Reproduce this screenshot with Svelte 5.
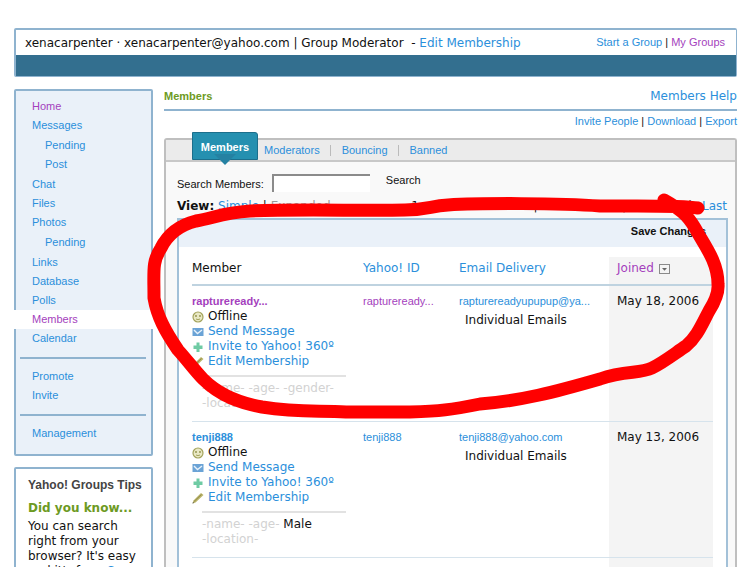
<script>
  const nav = [
    { label: 'Home', visited: true },
    { label: 'Messages', children: ['Pending', 'Post'] },
    { label: 'Chat' },
    { label: 'Files' },
    { label: 'Photos', children: ['Pending'] },
    { label: 'Links' },
    { label: 'Database' },
    { label: 'Polls' },
    { label: 'Members', visited: true, current: true },
    { label: 'Calendar' }
  ];

  const tabs = ['Moderators', 'Bouncing', 'Banned'];

  const members = [
    {
      name: 'raptureready...',
      email: 'rapturereadyupupup@ya...',
      joined: 'May 18, 2006',
      gender: '',
      visited: true
    },
    {
      name: 'tenji888',
      email: 'tenji888@yahoo.com',
      joined: 'May 13, 2006',
      gender: 'Male',
      visited: false
    },
    { name: '', email: '', joined: '', gender: '', visited: false }
  ];
</script>

<div class="page">
  <header class="top">
    <div class="top-row">
      <p class="who">
        xenacarpenter · xenacarpenter@yahoo.com | Group Moderator &nbsp;- <a href="#edit">Edit Membership</a>
      </p>
      <p class="small"><a href="#start">Start a Group</a> | <a class="visited" href="#mine">My Groups</a></p>
    </div>
    <div class="band"></div>
  </header>

  <div class="columns">
    <aside>
      <nav class="side small" aria-label="Group">
        <ul>
          {#each nav as item}
            <li>
              <a class="item" class:visited={item.visited} class:current={item.current} href="#nav">{item.label}</a>
              {#if item.children}
                <ul class="sub">
                  {#each item.children as child}
                    <li><a class="item" href="#nav">{child}</a></li>
                  {/each}
                </ul>
              {/if}
            </li>
          {/each}
        </ul>
        <hr />
        <ul>
          <li><a class="item" href="#promote">Promote</a></li>
          <li><a class="item" href="#invite">Invite</a></li>
        </ul>
        <hr />
        <ul>
          <li><a class="item" href="#manage">Management</a></li>
        </ul>
      </nav>

      <section class="tips">
        <h2>Yahoo! Groups Tips</h2>
        <h3>Did you know...</h3>
        <p>You can search right from your browser? It's easy and it's free. <a href="#see">See how</a></p>
      </section>
    </aside>

    <main>
      <div class="title">
        <h1>Members</h1>
        <a href="#help">Members Help</a>
      </div>
      <p class="actions small">
        <a href="#invite">Invite People</a> | <a href="#download">Download</a> | <a href="#export">Export</a>
      </p>

      <section class="panel">
        <div class="tabs small">
          <a class="active" href="#members">Members</a>
          {#each tabs as tab}
            <a class="tab" href="#tab">{tab}</a>
          {/each}
        </div>

        <div class="body">
          <form class="search small">
            <label for="q">Search Members:</label>
            <input id="q" type="text" />
            <button type="button">Search</button>
          </form>

          <div class="view">
            <p><b>View:</b> <a href="#simple">Simple</a> | <span class="dim">Expanded</span></p>
            <p class="pager">
              <span>1 - 30 of 106</span>
              <span class="dim">First</span><span>|</span>
              <span class="dim">&lt; Previous</span><span>|</span>
              <a href="#next">Next &gt;</a><span>|</span>
              <a href="#last">Last</a>
            </p>
          </div>

          <div class="list">
            <div class="save"><button type="button">Save Changes</button></div>
            <table>
              <colgroup>
                <col class="c-member" />
                <col class="c-id" />
                <col class="c-mail" />
                <col class="c-joined" />
              </colgroup>
              <thead>
                <tr>
                  <th>Member</th>
                  <th><a href="#id">Yahoo! ID</a></th>
                  <th><a href="#mail">Email Delivery</a></th>
                  <th class="joined">
                    <a class="visited sort" href="#joined">
                      Joined
                      <svg width="11" height="10" viewBox="0 0 11 10" aria-hidden="true">
                        <rect x="0.500" y="0.500" width="10" height="9" fill="#f4f4f4" stroke="#8a8a8a" />
                        <path d="M3 4h5L5.500 6.800z" fill="#666" />
                      </svg>
                    </a>
                  </th>
                </tr>
              </thead>
              <tbody>
                {#each members as m}
                  <tr>
                    <td>
                      {#if m.name}
                        <a class="small name" class:visited={m.visited} href="#profile">{m.name}</a>
                        <ul class="links">
                          <li>
                            <svg viewBox="0 0 12 12" aria-hidden="true">
                              <circle cx="6" cy="6" r="5" fill="#e9e8c4" stroke="#a3a35c" stroke-width="1.2" />
                              <circle cx="4" cy="5" r="0.900" fill="#8d8d45" />
                              <circle cx="8" cy="5" r="0.900" fill="#8d8d45" />
                              <path d="M4 8Q6 9.200 8 8" fill="none" stroke="#a3a35c" />
                            </svg>
                            <span>Offline</span>
                          </li>
                          <li>
                            <svg viewBox="0 0 12 12" aria-hidden="true">
                              <rect x="0.500" y="2" width="11" height="8" fill="#6ba3d6" />
                              <path d="M2 4L5.500 7.500L10 4" fill="none" stroke="#e8f2fb" stroke-width="1.400" />
                            </svg>
                            <a href="#send">Send Message</a>
                          </li>
                          <li>
                            <svg viewBox="0 0 12 12" aria-hidden="true">
                              <path d="M4.500 1.500h3v3h3v3.500h-3v3h-3v-3h-3V4.500h3z" fill="#6fcba4" />
                            </svg>
                            <a href="#360">Invite to Yahoo! 360º</a>
                          </li>
                          <li>
                            <svg viewBox="0 0 12 12" aria-hidden="true">
                              <path d="M0.500 11.500L1.500 8.500L9 1L11.500 3L3.500 10.500z" fill="#b9b368" />
                              <path d="M2 9.500L9.500 2.500" stroke="#8a8445" stroke-width="0.800" />
                              <path d="M0.500 11.500L1 10L2 11z" fill="#444" />
                            </svg>
                            <a href="#edit">Edit Membership</a>
                          </li>
                        </ul>
                        <p class="about">
                          -name- -age- {#if m.gender}<span>{m.gender}</span>{:else}-gender-{/if}<br />-location-
                        </p>
                      {/if}
                    </td>
                    <td>
                      <a class="small" class:visited={m.visited} href="#profile">{m.name}</a>
                    </td>
                    <td>
                      {#if m.email}
                        <a class="small" href="#mail">{m.email}</a>
                        <p class="delivery">Individual Emails</p>
                      {/if}
                    </td>
                    <td class="joined">{m.joined}</td>
                  </tr>
                {/each}
              </tbody>
            </table>
          </div>
        </div>
      </section>
    </main>
  </div>

  <svg class="marker" width="750" height="567" viewBox="0 0 750 567" aria-hidden="true">
    <path
      d="M698 208C680 205 640 206 600 206C560 203 480 203 448 205C430 206 428 210 405 210C370 211 290 209 250 211C222 213 214 218 196 221C180 225 168 234 161 248C152 262 154 270 154 298C157 316 165 331 178 350C188 361 195 371 203 379C220 396 240 403 262 407C300 413 320 410 346 412L410 412C440 411 450 410 480 404C520 401 555 392 600 379C625 370 640 374 652 368C664 362 674 354 686 346C697 337 702 324 709 311C714 303 719 294 718 284C718 265 708 250 699 235C690 218 684 211 664 200"
    />
  </svg>
</div>

<style>
  :global(body) {
    margin: 0;
    background: #fff;
  }
  .page {
    position: relative;
    box-sizing: border-box;
    height: 100vh;
    overflow: hidden;
    padding: 28px 13px 0 14px;
    font: 12px/15px Verdana, 'DejaVu Sans', sans-serif;
    color: #111;
  }
  p, h1, h2, h3, ul {
    margin: 0;
    padding: 0;
    list-style: none;
  }
  a {
    color: #2b8fdb;
    text-decoration: none;
  }
  a.visited {
    color: #a43fbd;
  }
  .small, button {
    font-family: Arial, 'Liberation Sans', sans-serif;
    font-size: 11px;
  }
  button {
    padding: 0;
    border: 0;
    background: none;
    color: #111;
  }

  .top {
    border: 2px solid #8fb3cf;
    border-width: 2px 1px 1px 2px;
    border-radius: 2px;
  }
  .top-row {
    display: flex;
    justify-content: space-between;
    padding: 5px 11px 4px 9px;
  }
  .who {
    padding-top: 1px;
  }
  .band {
    height: 21px;
    background: #336f8f;
  }

  .columns {
    display: flex;
    gap: 11px;
    padding-top: 12px;
  }
  aside {
    flex: 0 0 139px;
    min-width: 0;
    display: flex;
    flex-direction: column;
    gap: 11px;
  }
  .side, .tips {
    border: 2px solid #8fb3cf;
    border-radius: 2px;
  }
  .side {
    padding: 6px 0 11px;
    background: #eaf1f9;
  }
  .item {
    display: block;
    padding-left: 16px;
    line-height: 19px;
  }
  .sub {
    margin: 1px 0;
  }
  .sub .item {
    padding-left: 29px;
  }
  .current {
    margin: 0 -2px;
    padding-left: 18px;
    background: #fff;
  }
  .side hr {
    height: 2px;
    margin: 9px 5px 8px 4px;
    border: 0;
    background: #8fb3cf;
  }
  .tips {
    padding: 9px 8px 9px 12px;
  }
  h2 {
    margin-bottom: 8px;
    font: bold 12px/15px Arial, 'Liberation Sans', sans-serif;
    color: #444;
    white-space: nowrap;
  }
  h3 {
    margin-bottom: 3px;
    font-size: 12px;
    color: #6d9a23;
  }

  main {
    flex: 1;
    min-width: 0;
  }
  .title {
    display: flex;
    justify-content: space-between;
    padding-bottom: 5px;
    border-bottom: 2px solid #8fb3cf;
  }
  h1 {
    font: bold 11px/15px Arial, 'Liberation Sans', sans-serif;
    color: #6d9a23;
  }
  .actions {
    padding-top: 3px;
    text-align: right;
  }
  .panel {
    margin-top: 9px;
    border: 2px solid #bfbfbf;
    border-bottom: 0;
    border-radius: 3px 3px 0 0;
    background: #f9f9f9;
  }
  .tabs {
    display: flex;
    align-items: center;
    height: 20px;
    padding-left: 26px;
    border-bottom: 2px solid #c8c8c8;
    background: #ebebeb;
  }
  .active {
    position: relative;
    align-self: flex-end;
    box-sizing: border-box;
    height: 28px;
    width: 66px;
    border: 1px solid #1c6f8c;
    border-radius: 0 3px 0 0;
    background: #2590b0;
    color: #fff;
    font-weight: bold;
    line-height: 28px;
    text-align: center;
  }
  .active::after {
    content: '';
    position: absolute;
    top: 100%;
    left: 50%;
    margin: -5px 0 0 -11px;
    border: 11px solid transparent;
    border-top-color: #2581a2;
    border-bottom: 0;
  }
  .tab {
    padding-left: 6px;
  }
  .tab + .tab::before {
    content: '';
    display: inline-block;
    width: 1px;
    height: 11px;
    margin: 0 11px 0 4px;
    background: #bbb;
    vertical-align: middle;
  }
  .body {
    padding: 12px 7px 0 11px;
  }
  .search {
    display: flex;
    height: 17px;
    gap: 8px;
  }
  .search label {
    padding-top: 3px;
  }
  .search input {
    box-sizing: border-box;
    width: 98px;
    height: 18px;
    padding: 1px 2px;
    border: 0;
    border-top: 2px solid #8b8b8b;
    border-left: 2px solid #8b8b8b;
    background: #fff;
    font: inherit;
  }
  .search button {
    align-self: flex-start;
    margin-left: 8px;
  }
  .view {
    display: flex;
    justify-content: space-between;
    padding: 8px 1px 4px 0;
  }
  .pager {
    display: flex;
    gap: 10px;
  }
  .dim {
    color: #999;
  }
  .list {
    border: 2px solid #a3c1d8;
    border-bottom: 0;
    background: #fff;
  }
  .save {
    padding: 4px 20px 8px;
    background: #eaf1f9;
    text-align: right;
  }
  .save button {
    font-weight: bold;
    line-height: 15px;
  }
  table {
    width: calc(100% - 26px);
    margin: 10px 13px 0;
    border-collapse: collapse;
    table-layout: fixed;
  }
  .c-member {
    width: 171px;
  }
  .c-id {
    width: 96px;
  }
  .c-joined {
    width: 104px;
  }
  th {
    padding: 4px 0 8px;
    border-bottom: 2px solid #bfd3e0;
    font-weight: normal;
    text-align: left;
  }
  td {
    height: 127px;
    padding: 8px 0 0;
    border-bottom: 1px solid #d6e3ec;
    vertical-align: top;
    white-space: nowrap;
  }
  .joined {
    padding-left: 8px;
    background: #f4f4f4;
  }
  .sort {
    display: flex;
    align-items: center;
    gap: 5px;
  }
  td .small {
    display: block;
  }
  .name {
    font-weight: bold;
  }
  .links li {
    display: flex;
    align-items: center;
    gap: 4px;
  }
  .links svg {
    width: 12px;
    height: 12px;
  }
  .about {
    width: 144px;
    margin: 6px 0 0 10px;
    padding-top: 4px;
    border-top: 2px solid #e2e2e2;
    color: #d2d2d2;
  }
  .about span {
    color: #111;
  }
  .delivery {
    padding: 4px 0 0 6px;
  }
  .marker {
    position: absolute;
    top: 0;
    left: 0;
    pointer-events: none;
  }
  .marker path {
    fill: none;
    stroke: #f00;
    stroke-width: 13;
    stroke-linecap: round;
    stroke-linejoin: round;
  }
</style>
